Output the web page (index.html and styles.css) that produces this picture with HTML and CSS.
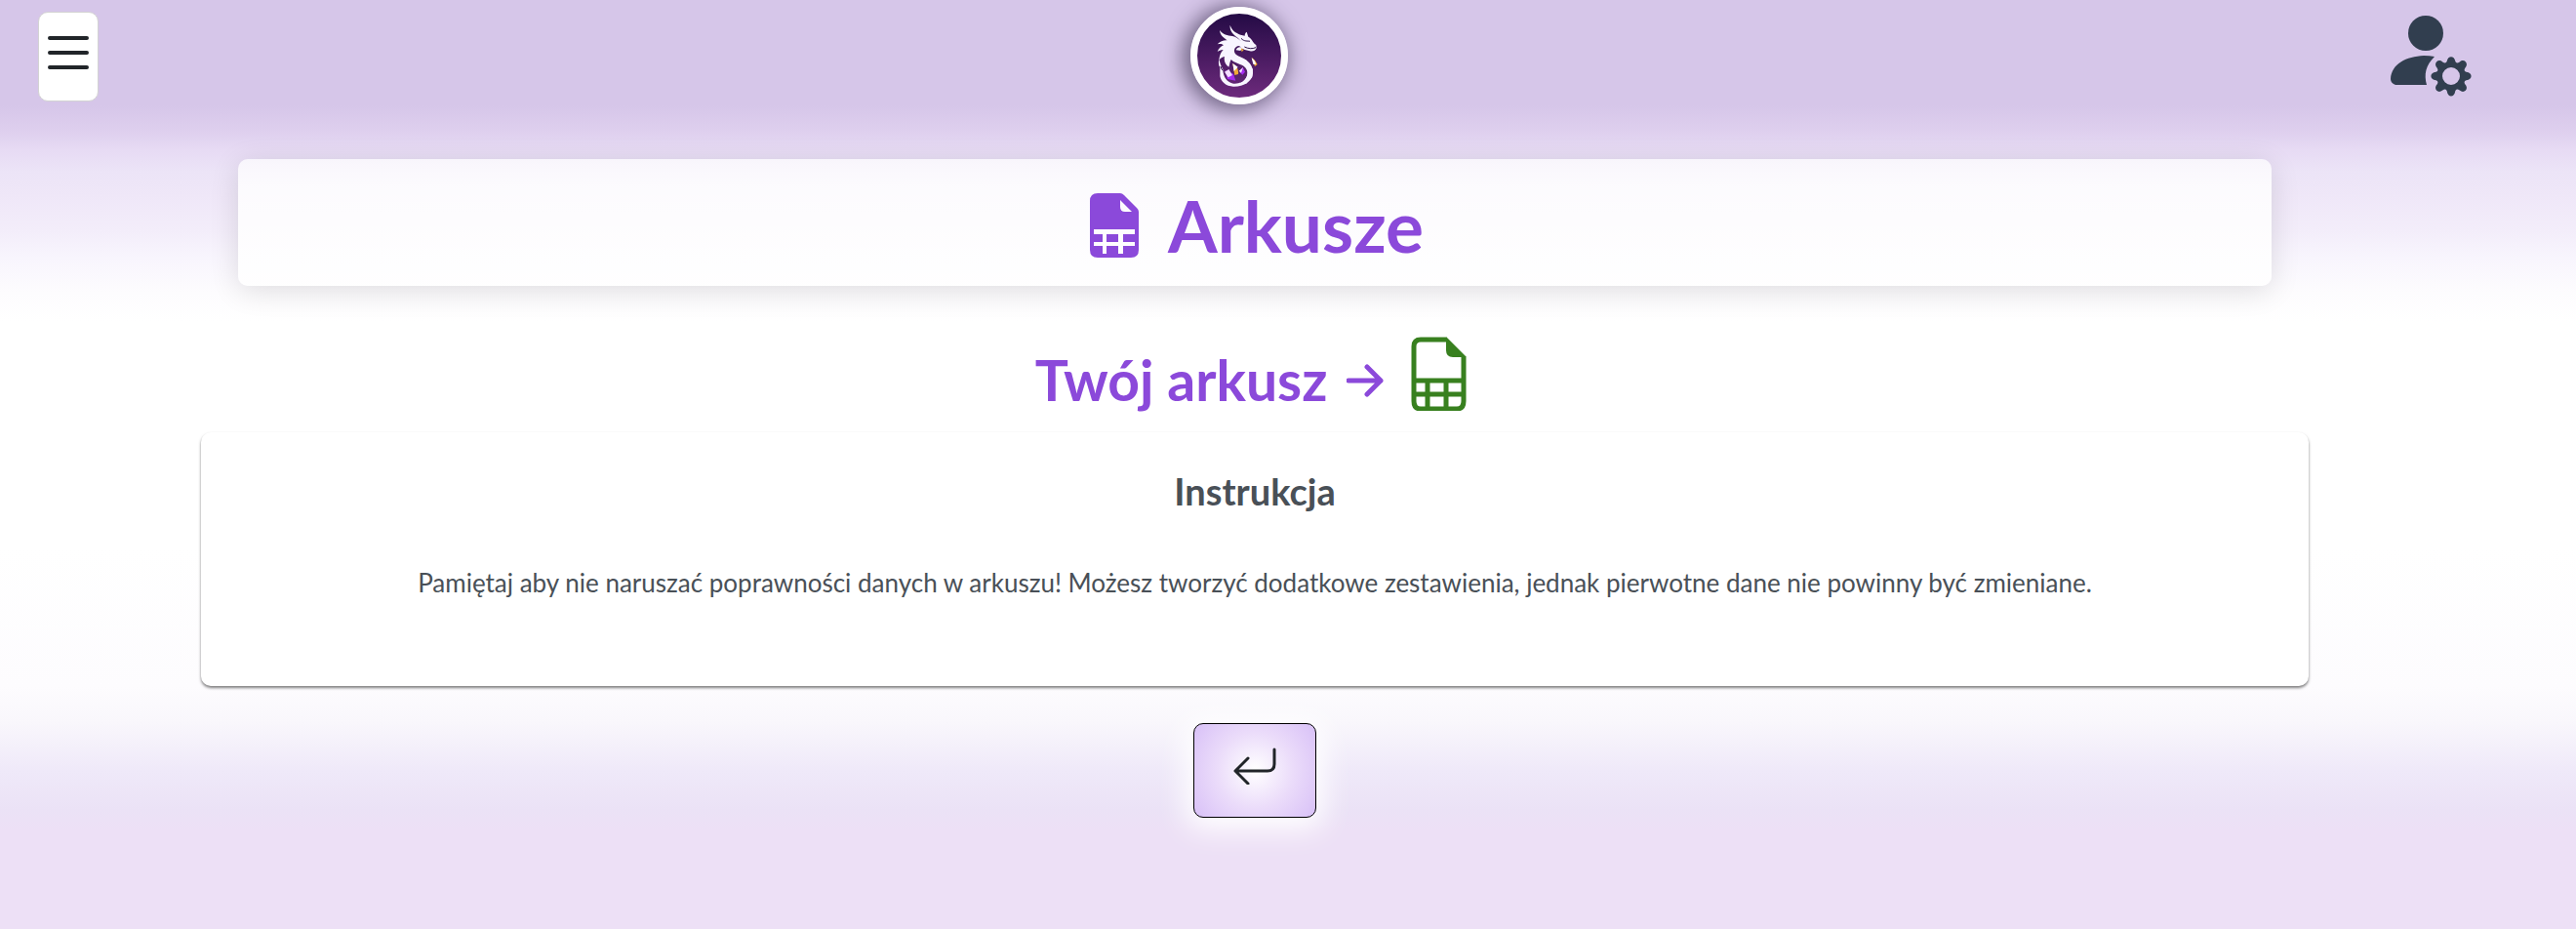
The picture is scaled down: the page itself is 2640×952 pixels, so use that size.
FILE: index.html
```
<!DOCTYPE html>
<html lang="pl">
<head>
<meta charset="utf-8">
<meta name="viewport" content="width=device-width, initial-scale=1">
<title>Arkusze</title>
<link rel="stylesheet" href="styles.css">
</head>
<body>
<header class="topbar">
  <button class="menu-button" type="button" aria-label="Menu">
    <svg class="menu-icon" viewBox="0 0 42 36" aria-hidden="true"><path d="M2 3h38M2 18h38M2 33h38"/></svg>
  </button>
  <a class="logo" href="#" aria-label="Strona główna">
    <svg viewBox="111 43 258 258" class="logo-art" aria-hidden="true">
      <path fill="#f8f5ff" d="M212 78C218 96 229 101 244 108L257 111C257 104 260 101 263 99L268 114C282 122 281 133 292 139L293 149C290 157 281 160 273 158L257 154L246 149C241 137 232 142 227 149C220 163 231 173 246 177C270 187 283 203 282 226C280 251 253 268 222 267C199 266 184 252 181 235L181 207C176 204 176 190 178 181C180 193 184 204 190 214C190 239 204 254 222 258C247 261 267 243 265 222C262 202 239 199 222 190L215 184C211 190 211 199 208 207C197 200 192 187 195 175C187 176 183 180 178 185C180 172 182 163 191 154C182 154 178 157 173 160C177 149 184 144 192 140C186 135 181 136 173 137C182 127 193 124 203 125C195 118 181 111 180 94C190 108 204 110 219 112C231 114 237 121 246 128C240 122 238 119 233 116C219 106 210 94 212 78Z"/>
      <path fill="#f8f5ff" d="M218 178C240 186 258 196 265 214C270 236 257 252 240 259L262 258L280 238L282 214L262 186L232 172Z"/>
      <path fill="none" stroke="#2b1048" stroke-width="3" d="M246 119C256 130 266 126 273 128M256 145C268 151 280 152 291 147M183 205Q186 216 190 218"/>
      <path fill="#f8f5ff" d="M230 155C233 146 244 142 249 149L244 157Z"/>
      <path fill="#efaa35" d="M245 149L254 154L248 161ZM220 196Q240 208 237 229L226 232ZM278 177Q292 187 296 199L288 205Z"/>
      <path fill="#fff" d="M220 196L236 207L224 220ZM278 179Q290 187 291 199L283 198Z"/>
      <path fill="#a32bef" d="M197 218L222 228L229 249L204 244ZM242 224L251 207L258 222L250 231Z"/>
      <path fill="#f3ddff" d="M195 222L208 214L219 232L206 239ZM239 219L252 208L246 225Z"/>
    </svg>
  </a>
  <button class="user-button" type="button" aria-label="Ustawienia konta">
    <svg class="user-icon" viewBox="0 0 84 84" aria-hidden="true">
      <circle cx="36" cy="18" r="18"/>
      <path d="M5 71C2 70 0 68 0 65C1 49 16 42 34 41Q40 41 45 42C36 51 34 60 37 71Z"/>
      <path fill-rule="evenodd" d="M57.800 46.500C58.600 40.700 65.400 40.700 66.200 46.500Q67.200 49.800 70.800 47.400C75.200 43.500 80.500 48.800 76.600 53.200Q74.200 56.800 77.500 57.800C84.300 58.600 84.300 65.400 77.500 66.200Q74.200 67.200 76.600 70.800C80.500 75.200 75.200 80.500 70.800 76.600Q67.200 74.200 66.200 77.500C65.400 84.300 58.600 84.300 57.800 77.500Q56.800 74.200 53.200 76.600C48.800 80.500 43.500 75.200 47.400 70.800Q49.800 67.200 46.500 66.200C39.700 65.400 39.700 58.600 46.500 57.800Q49.800 56.800 47.400 53.200C43.500 48.800 48.800 43.500 53.200 47.400Q56.800 49.800 57.800 46.500ZM62 53a9 9 0 1 0 0 18a9 9 0 1 0 0-18Z"/>
    </svg>
  </button>
</header>
<main class="content">
  <h1 class="title-card">
    <svg class="title-icon" viewBox="0 0 50 66" aria-hidden="true">
      <path fill-rule="evenodd" d="M8 0H31Q33 0 35 2L48 15Q50 17 50 19V58Q50 66 42 66H8Q0 66 0 58V8Q0 0 8 0ZM31 7V14Q31 19 36 19H43ZM4 37V42H13V50H4V54H13V62H17V54H29V62H34V54H46V50H34V42H46V37ZM17 42H29V50H17Z"/>
    </svg>
    <span>Arkusze</span>
  </h1>
  <h2 class="sheet-heading">
    <span class="sheet-label">Twój arkusz</span>
    <svg class="arrow-icon" viewBox="0 0 38 34" aria-hidden="true"><path d="M2 17H35M21 3L35 17L21 31"/></svg>
    <a class="sheet-link" href="#" aria-label="Otwórz arkusz">
      <svg viewBox="0 0 57 76" aria-hidden="true">
        <path class="sheet-lines" d="M36 3H10Q3 3 3 10V66Q3 74 10 74H47Q54 74 54 66V21M3 45H54M3 59H54M17 45V74M36 45V74"/>
        <path class="sheet-fold" d="M36 0L57 21H43Q36 21 36 14Z"/>
      </svg>
    </a>
  </h2>
  <section class="info-card">
    <h3 class="info-title">Instrukcja</h3>
    <p class="info-text">Pamiętaj aby nie naruszać poprawności danych w arkuszu! Możesz tworzyć dodatkowe zestawienia, jednak pierwotne dane nie powinny być zmieniane.</p>
  </section>
  <button class="back-button" type="button" aria-label="Wróć">
    <svg class="back-icon" viewBox="0 0 44 38" aria-hidden="true"><path d="M42 2V17Q42 24 35 24H2M15 11L2 24L15 37"/></svg>
  </button>
</main>
</body>
</html>
```

FILE: styles.css
```
* {
  box-sizing: border-box;
}

body {
  margin: 0;
  min-height: 100vh;
  font-family: Lato, "Open Sans", sans-serif;
  color: #495057;
  background: linear-gradient(#d6c6e9 0, #d6c6e9 108px, #decfee 134px, #e7dbf4 154px, #ece4f7 176px, #efe7f8 200px, #f3edfa 236px, #f8f5fd 264px, #fdfcfe 300px, #ffffff 330px, #ffffff 560px, #fdfcfe 704px, #f9f7fc 740px, #efe9f9 790px, #ebe2f6 830px, #ede0f6 850px) no-repeat #ede0f6;
}

.topbar {
  display: flex;
  justify-content: space-between;
  align-items: flex-start;
  padding: 7px 94px 0 39px;
}

.menu-button {
  width: 62px;
  height: 92px;
  margin-top: 5px;
  padding: 0 9px 8px;
  border: 1px solid #d3d3d3;
  border-radius: 10px;
  background: #fff;
}

.menu-icon {
  display: block;
  width: 42px;
  height: 36px;
  fill: none;
  stroke: #212529;
  stroke-width: 4;
  stroke-linecap: round;
}

.logo {
  width: 100px;
  height: 100px;
  border: 7px solid #fff;
  border-radius: 50%;
  overflow: hidden;
  background: linear-gradient(#240b45, #6d2a7c);
  box-shadow: -4px 2px 20px 4px rgba(50, 40, 70, 0.6);
}

.logo-art {
  display: block;
  width: 100%;
  height: 100%;
}

.user-button {
  margin-top: 9px;
  padding: 0 12px;
  border: 0;
  background: none;
}

.user-icon {
  display: block;
  width: 84px;
  height: 84px;
  fill: #313e4f;
}

.content {
  display: flex;
  flex-direction: column;
  align-items: center;
  padding: 56px 68px 24px 0;
}

.title-card {
  display: flex;
  justify-content: center;
  align-items: center;
  gap: 30px;
  width: 81%;
  min-height: 130px;
  margin: 0;
  padding: 6px 0 0 4px;
  border-radius: 10px;
  background: linear-gradient(rgba(255, 255, 255, 0.7), rgba(255, 255, 255, 0.84) 30px, rgba(255, 255, 255, 0.9));
  box-shadow: 0 5px 30px rgba(0, 0, 0, 0.12);
  color: #8b49da;
  font-size: 73px;
  line-height: 80px;
}

.title-icon {
  width: 50px;
  height: 66px;
  fill: currentColor;
}

.sheet-heading {
  display: flex;
  align-items: center;
  margin: 50px 0 0;
  padding-right: 8px;
  color: #8b49da;
  font-size: 57px;
  line-height: 68px;
}

.sheet-label {
  padding-top: 12px;
}

.arrow-icon {
  width: 38px;
  height: 34px;
  margin: 14px 28px 0 20px;
  fill: none;
  stroke: currentColor;
  stroke-width: 5;
  stroke-linecap: round;
  stroke-linejoin: round;
}

.sheet-link svg {
  display: block;
  width: 57px;
  height: 76px;
}

.sheet-lines {
  fill: none;
  stroke: #38801f;
  stroke-width: 5;
}

.sheet-fold {
  fill: #38801f;
}

.info-card {
  width: 84%;
  margin-top: 20px;
  padding: 36px 16px 86px;
  border-radius: 10px;
  background: #fff;
  box-shadow: 0 2px 3px rgba(0, 0, 0, 0.5);
  text-align: center;
}

.info-title {
  margin: 0;
  font-size: 38px;
  line-height: 48px;
}

.info-text {
  margin: 50px 0 0;
  font-size: 26px;
  line-height: 40px;
}

.back-button {
  display: flex;
  justify-content: center;
  width: 126px;
  height: 97px;
  margin-top: 38px;
  padding-top: 24px;
  border: 1px solid #000;
  border-radius: 10px;
  background: radial-gradient(circle, #fff, #ebdcfa 50%, #d8c0f7);
  box-shadow: 0 4px 30px 8px #fff;
}

.back-icon {
  width: 44px;
  height: 38px;
  fill: none;
  stroke: #212529;
  stroke-width: 3;
  stroke-linecap: round;
  stroke-linejoin: round;
}
```
